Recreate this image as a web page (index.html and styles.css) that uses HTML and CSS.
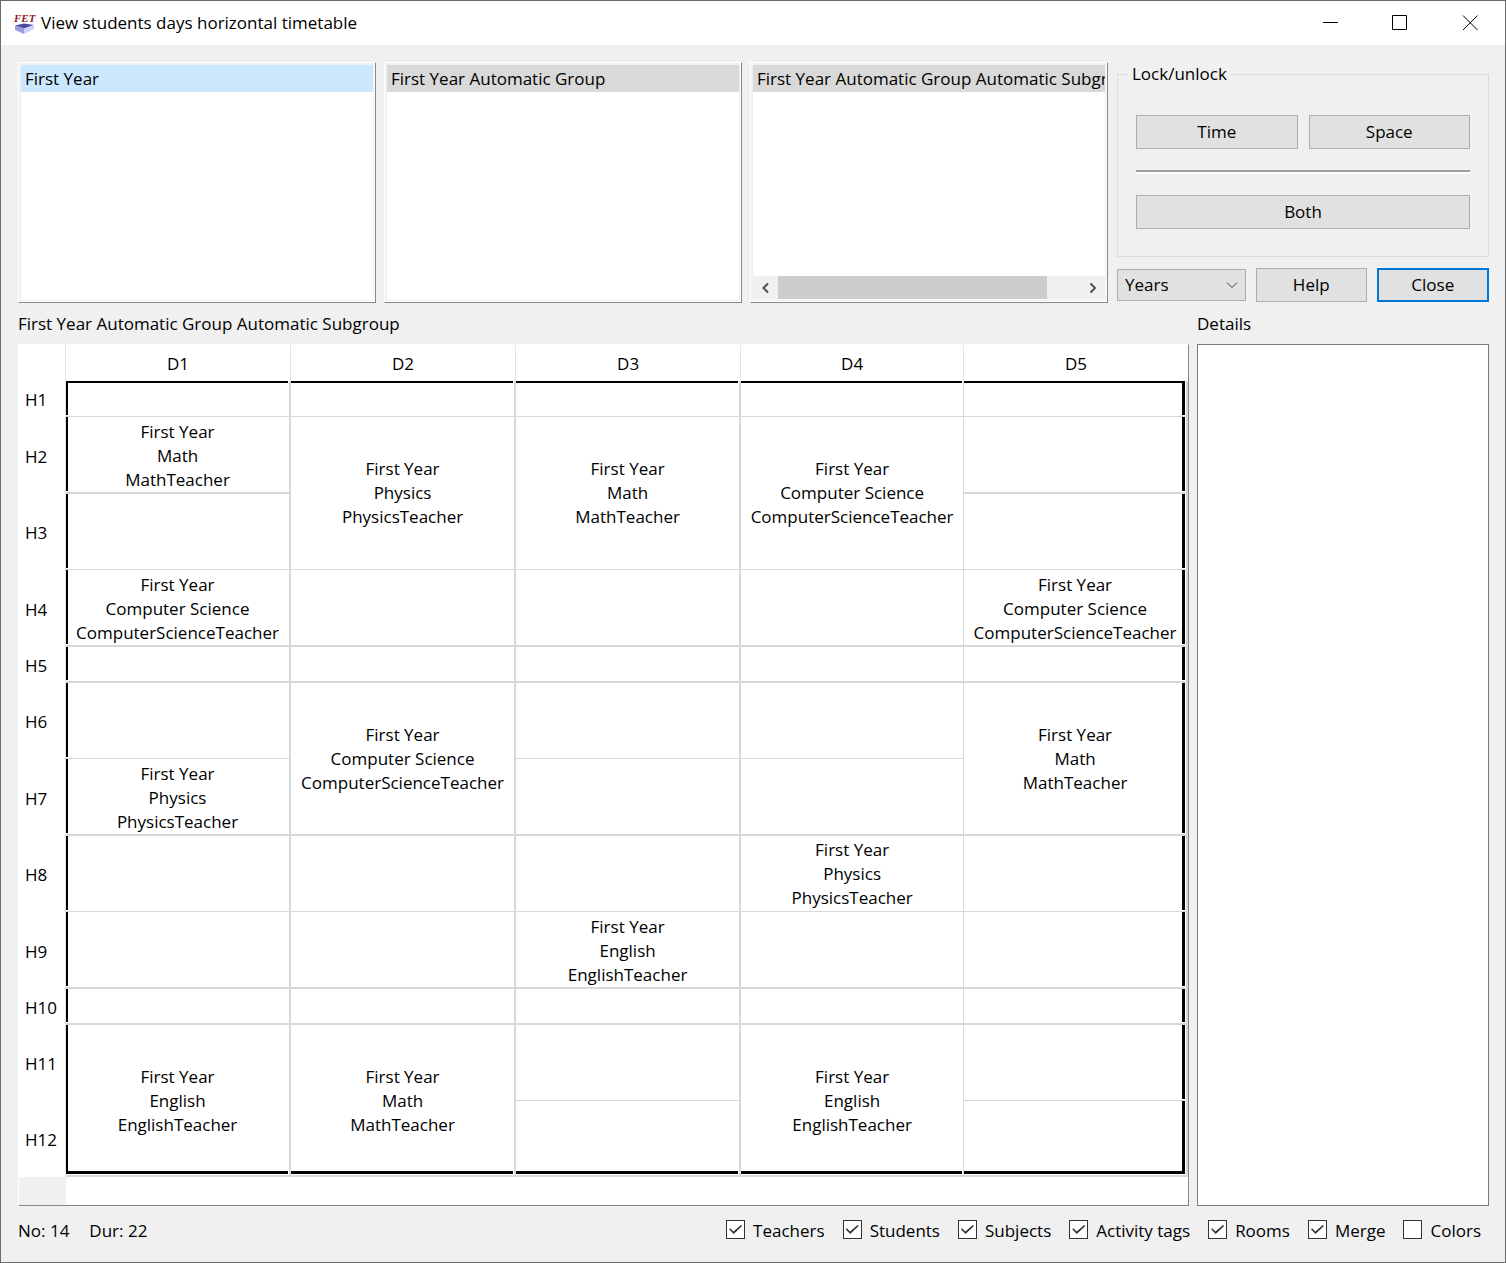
FILE: index.html
```html
<!DOCTYPE html>
<html lang="en">
<head>
<meta charset="utf-8">
<title>View students days horizontal timetable</title>
<link rel="stylesheet" href="styles.css">
</head>
<body>
<div class="window">
  <header class="titlebar">
    <svg class="app-icon" viewBox="0 0 22 22" aria-hidden="true">
      <path d="M2 13.500 L11 11.500 L21 13 L11 16.500Z" fill="#4a4aa0"/>
      <path d="M2 13.500 L11 16.500 V22 L2 18Z" fill="#9c9cdc"/>
      <path d="M11 16.500 L21 13 V17 L11 22Z" fill="#d0d0ff"/>
      <text x="1" y="10" class="app-icon-text">FET</text>
    </svg>
    <h1 class="title">View students days horizontal timetable</h1>
    <button class="win-btn" aria-label="Minimize"><svg width="16" height="16" viewBox="0 0 16 16"><path d="M1 7.500H16"/></svg></button>
    <button class="win-btn" aria-label="Maximize"><svg width="16" height="16" viewBox="0 0 16 16"><path d="M.5 .5H14.500V14.500H.5Z"/></svg></button>
    <button class="win-btn" aria-label="Close window"><svg width="16" height="16" viewBox="0 0 16 16"><path d="M1 .5L15.500 15M15.500 .5L1 15"/></svg></button>
  </header>

  <main class="content">
    <section class="selectors">
      <div class="frame list"><ul role="listbox" aria-label="Years"><li class="item active" role="option" aria-selected="true">First Year</li></ul></div>
      <div class="frame list"><ul role="listbox" aria-label="Groups"><li class="item" role="option" aria-selected="true">First Year Automatic Group</li></ul></div>
      <div class="frame list">
        <ul role="listbox" aria-label="Subgroups"><li class="item" role="option" aria-selected="true">First Year Automatic Group Automatic Subgroup</li></ul>
        <div class="scrollbar">
          <button class="scroll-btn" aria-label="Scroll left"><svg width="8" height="12" viewBox="0 0 8 12"><path d="M6 1.500L1.500 6L6 10.500"/></svg></button>
          <div class="track"><div class="thumb"></div></div>
          <button class="scroll-btn" aria-label="Scroll right"><svg width="8" height="12" viewBox="0 0 8 12"><path d="M1.500 1.500L6 6L1.500 10.500"/></svg></button>
        </div>
      </div>
      <div class="controls">
        <fieldset class="group">
          <legend>Lock/unlock</legend>
          <div class="pair"><button class="btn">Time</button><button class="btn">Space</button></div>
          <hr>
          <button class="btn">Both</button>
        </fieldset>
        <div class="actions">
          <div class="combo">
            <select aria-label="View by"><option>Years</option><option>Groups</option><option>Subgroups</option></select>
            <svg class="chevron" width="12" height="8" viewBox="0 0 12 8"><path d="M1 1.500L6 6.500L11 1.500"/></svg>
          </div>
          <button class="btn">Help</button>
          <button class="btn default">Close</button>
        </div>
      </div>
    </section>

    <section class="views">
      <div class="view main-view">
        <h2 class="label">First Year Automatic Group Automatic Subgroup</h2>
        <div class="table-frame">
          <table class="timetable">
            <thead>
              <tr><th class="corner"></th><th class="wide">D1</th><th class="wide">D2</th><th class="wide">D3</th><th class="narrow">D4</th><th>D5</th></tr>
            </thead>
            <tbody>
              <tr class="short thin top"><th>H1</th><td class="first"></td><td></td><td></td><td class="slim"></td><td class="last"></td></tr>
              <tr><th>H2</th><td class="first">First Year<br>Math<br>MathTeacher</td><td rowspan="2" class="thin">First Year<br>Physics<br>PhysicsTeacher</td><td rowspan="2" class="thin">First Year<br>Math<br>MathTeacher</td><td rowspan="2" class="thin slim">First Year<br>Computer Science<br>ComputerScienceTeacher</td><td class="last"></td></tr>
              <tr class="thin"><th>H3</th><td class="first"></td><td class="last"></td></tr>
              <tr><th>H4</th><td class="first">First Year<br>Computer Science<br>ComputerScienceTeacher</td><td></td><td></td><td class="slim"></td><td class="last">First Year<br>Computer Science<br>ComputerScienceTeacher</td></tr>
              <tr class="short"><th>H5</th><td class="first"></td><td></td><td></td><td class="slim"></td><td class="last"></td></tr>
              <tr class="thin"><th>H6</th><td class="first"></td><td rowspan="2" class="thick">First Year<br>Computer Science<br>ComputerScienceTeacher</td><td></td><td class="slim"></td><td rowspan="2" class="last thick">First Year<br>Math<br>MathTeacher</td></tr>
              <tr><th>H7</th><td class="first">First Year<br>Physics<br>PhysicsTeacher</td><td></td><td class="slim"></td></tr>
              <tr class="thin"><th>H8</th><td class="first"></td><td></td><td></td><td class="slim">First Year<br>Physics<br>PhysicsTeacher</td><td class="last"></td></tr>
              <tr><th>H9</th><td class="first"></td><td></td><td>First Year<br>English<br>EnglishTeacher</td><td class="slim"></td><td class="last"></td></tr>
              <tr class="short"><th>H10</th><td class="first"></td><td></td><td></td><td class="slim"></td><td class="last"></td></tr>
              <tr class="thin"><th>H11</th><td rowspan="2" class="first end thick">First Year<br>English<br>EnglishTeacher</td><td rowspan="2" class="end thick">First Year<br>Math<br>MathTeacher</td><td></td><td rowspan="2" class="slim end thick">First Year<br>English<br>EnglishTeacher</td><td class="last"></td></tr>
              <tr class="final"><th>H12</th><td class="end"></td><td class="last end"></td></tr>
            </tbody>
          </table>
          <div class="header-rest"></div>
        </div>
      </div>
      <div class="view details-view">
        <label class="label" for="details">Details</label>
        <textarea id="details" class="details" readonly></textarea>
      </div>
    </section>

    <footer class="status">
      <span>No: 14</span><span>Dur: 22</span>
      <div class="options">
        <label><input type="checkbox" checked>Teachers</label>
        <label><input type="checkbox" checked>Students</label>
        <label><input type="checkbox" checked>Subjects</label>
        <label><input type="checkbox" checked>Activity tags</label>
        <label><input type="checkbox" checked>Rooms</label>
        <label><input type="checkbox" checked>Merge</label>
        <label><input type="checkbox">Colors</label>
      </div>
    </footer>
  </main>
</div>
</body>
</html>
```
FILE: styles.css
```css
* { box-sizing: border-box; }
body {
  margin: 0;
  background: #f0f0f0;
  color: #000;
  font: 17px/24px "Open Sans", "Noto Sans", sans-serif;
}
button, select, textarea { font: inherit; color: inherit; border-radius: 0; }
.window {
  min-height: 100vh;
  display: flex;
  flex-direction: column;
  border: 1px solid #6b6b6b;
}

.titlebar {
  display: flex;
  align-items: center;
  height: 44px;
  padding-left: 12px;
  background: #fff;
}
.app-icon { width: 22px; height: 22px; overflow: visible; }
.app-icon-text {
  font: italic bold 11px "Liberation Serif", serif;
  fill: #8c1c24;
}
.title { flex: 1; margin: 0 0 0 6px; font-size: 17px; font-weight: 400; }
.win-btn {
  width: 70px;
  height: 44px;
  display: grid;
  place-items: center;
  padding: 0;
  border: 0;
  background: none;
}
.win-btn path { fill: none; stroke: #000; }

.content {
  flex: 1;
  display: flex;
  flex-direction: column;
  padding: 17px 16px 0 17px;
}
.selectors { display: flex; gap: 8px; height: 241px; }
.frame {
  border: 1px solid #fff;
  border-right-color: #828790;
  border-bottom-color: #828790;
  background: #fff;
}
.list {
  flex: 1 1 0;
  min-width: 0;
  display: flex;
  flex-direction: column;
  padding: 2px 2px 3px;
  box-shadow: inset -1px -1px #fff, inset 0 0 0 2px #f0f0f0;
}
.list ul { flex: 1; margin: 0; padding: 0; list-style: none; overflow: hidden; }
.item {
  height: 27px;
  padding-left: 4px;
  line-height: 27px;
  white-space: nowrap;
  overflow: hidden;
  background: #d9d9d9;
}
.item.active { background: #cce8ff; }
.scrollbar { display: flex; height: 23px; background: #f0f0f0; }
.scroll-btn {
  width: 25px;
  display: grid;
  place-items: center;
  padding: 0;
  border: 0;
  background: none;
}
.scroll-btn path { fill: none; stroke: #505050; stroke-width: 2; }
.track { flex: 1; }
.thumb { width: 89%; height: 100%; background: #cdcdcd; }

.controls { width: 373px; display: flex; flex-direction: column; padding-left: 1px; }
.group {
  margin: 0;
  padding: 29px 18px 27px;
  border: 1px solid #dcdcdc;
  min-width: 0;
}
.group legend { margin-left: -8px; padding: 0 4px; }
.pair { display: flex; gap: 11px; }
.btn {
  flex: 1;
  width: 100%;
  height: 34px;
  padding: 0;
  border: 1px solid #adadad;
  background: #e1e1e1;
}
.group .btn { display: block; }
.group hr {
  height: 4px;
  margin: 21px 0;
  border: 0;
  border-top: 2px solid #a0a0a0;
  border-bottom: 2px solid #fff;
}
.actions { display: flex; align-items: center; gap: 10px; margin-top: 11px; }
.combo { position: relative; width: 129px; }
.combo select {
  display: block;
  width: 100%;
  height: 32px;
  padding: 0 7px;
  appearance: none;
  border: 1px solid #adadad;
  background: #e1e1e1;
}
.chevron { position: absolute; right: 8px; top: 12px; pointer-events: none; }
.chevron path { fill: none; stroke: #444; }
.btn.default { border: 2px solid #0078d7; }

.views { flex: 1; display: flex; gap: 8px; }
.view { display: flex; flex-direction: column; }
.main-view { flex: 1; min-width: 0; }
.details-view { width: 292px; }
.label {
  height: 41px;
  margin: 0;
  font-size: 17px;
  font-weight: 400;
  line-height: 41px;
}
.details {
  flex: 1;
  width: 100%;
  padding: 4px;
  resize: none;
  border: 1px solid #7a7a7a;
  background: #fff;
}
.table-frame {
  flex: 1;
  display: flex;
  flex-direction: column;
  border: 1px solid #fff;
  border-right-color: #828790;
  border-bottom-color: #828790;
  background: #fff;
}
.header-rest { flex: 1; width: 47px; min-height: 27px; background: #f0f0f0; }

.timetable {
  width: 100%;
  table-layout: fixed;
  border-collapse: separate;
  border-spacing: 0;
  text-align: center;
}
.timetable th { padding: 2px 0 0; font-weight: 400; }
.timetable thead th { height: 36px; border-right: 1px solid #e5e5e5; }
.timetable thead th:last-child { border-right: 0; }
.timetable .corner { width: 47px; }
.timetable .wide { width: 19.25%; }
.timetable .narrow { width: 19.08%; }
.timetable tbody th {
  padding-left: 6px;
  text-align: left;
  border-right: 1px solid #e5e5e5;
}
.timetable tbody tr { height: 77px; }
.timetable tbody tr.thin, .timetable tbody tr.final { height: 76px; }
.timetable tbody tr.short { height: 36px; }
.timetable td {
  padding: 3px 0 0;
  border: 0 solid #d8d8d8;
  border-width: 0 2px 2px 0;
}
.timetable .thin td, .timetable td.thin { padding-top: 1px; border-bottom-width: 1px; }
.timetable td.thin { padding-top: 0; }
.timetable td.thick { border-bottom-width: 2px; }
.timetable td.slim { border-right-width: 1px; }
.timetable td.first { box-shadow: inset 0 -1px #fff, inset 2px 0 #000; }
.timetable td.last { box-shadow: inset -1px -1px #fff, inset -4px 0 #000; }
.timetable .top td { box-shadow: inset -1px 0 #fff, inset 0 2px #000; }
.timetable .top td.first { box-shadow: inset -1px -1px #fff, inset 2px 2px #000; }
.timetable .top td.last { box-shadow: inset -1px -1px #fff, inset -4px 0 #000, inset 0 2px #000; }
.timetable td.end { box-shadow: inset -1px -1px #fff, inset 0 -4px #000; }
.timetable td.first.end { box-shadow: inset -1px -1px #fff, inset 0 -4px #000, inset 2px 0 #000; }
.timetable td.last.end { box-shadow: inset -1px -1px #fff, inset -4px -4px #000; }

.status { display: flex; align-items: center; gap: 20px; height: 56px; padding: 0 8px 7px 0; }
.options { display: flex; gap: 18px; margin-left: auto; }
.options label { display: flex; align-items: center; gap: 8px; }
.options input {
  width: 19px;
  height: 19px;
  margin: 0 0 2px;
  appearance: none;
  border: 1px solid #333;
  background: #fff;
}
.options input:checked::after {
  content: "";
  display: block;
  width: 13px;
  height: 9px;
  margin: 4px 2px;
  background: #333;
  clip-path: polygon(0 48%, 8% 36%, 34% 72%, 92% 0, 100% 12%, 35% 100%);
}
```
